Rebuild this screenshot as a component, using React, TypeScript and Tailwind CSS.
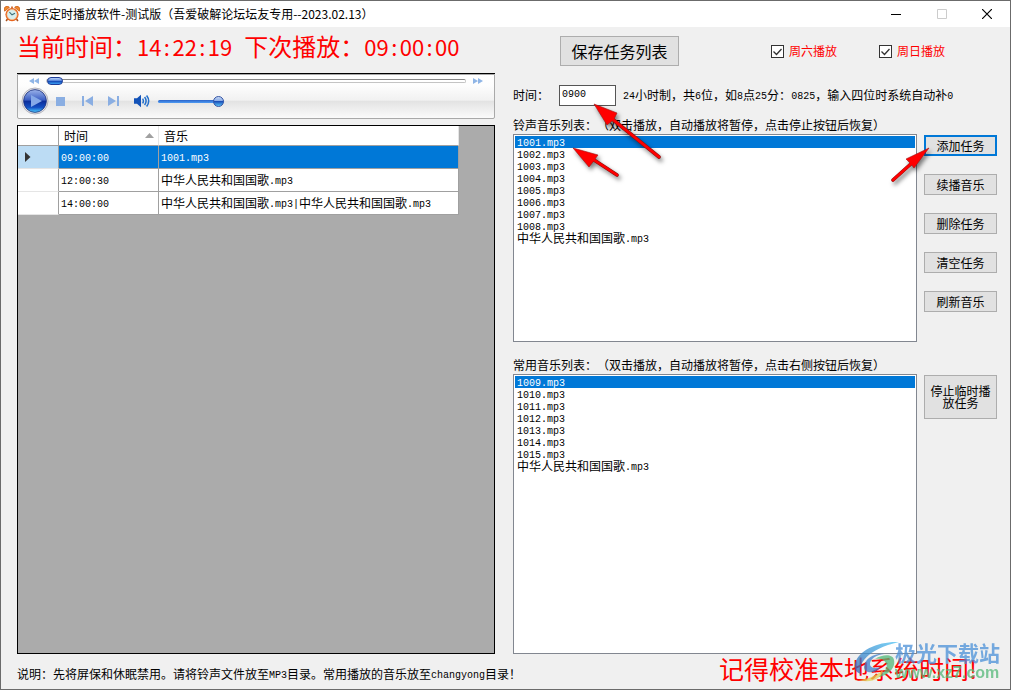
import { useState } from "react";
import type { ReactNode } from "react";
import clsx from "clsx";

interface Task {
  time: string;
  music: string;
}

const ANTHEM = "中华人民共和国国歌.mp3";

const TASKS: Task[] = [
  { time: "09:00:00", music: "1001.mp3" },
  { time: "12:00:30", music: ANTHEM },
  { time: "14:00:00", music: `${ANTHEM}|${ANTHEM}` },
];

const BELLS = [
  "1001.mp3",
  "1002.mp3",
  "1003.mp3",
  "1004.mp3",
  "1005.mp3",
  "1006.mp3",
  "1007.mp3",
  "1008.mp3",
  ANTHEM,
];

const COMMON = [
  "1009.mp3",
  "1010.mp3",
  "1011.mp3",
  "1012.mp3",
  "1013.mp3",
  "1014.mp3",
  "1015.mp3",
  ANTHEM,
];

const ACTIONS = ["添加任务", "续播音乐", "删除任务", "清空任务", "刷新音乐"];

/** Sets the Latin runs at half the width of the Chinese characters. */
function Mixed({ text }: { text: string }) {
  return (
    <>
      {text.split(/([\x20-\x7e]+)/).map((part, i) =>
        i % 2 ? (
          <span key={i} className="align-[1px] font-['Liberation_Mono',monospace] text-[10px] leading-[10px]">
            {part}
          </span>
        ) : (
          part
        ),
      )}
    </>
  );
}

/** Time with every colon in a cell as wide as a digit. */
function Clock({ value }: { value: string }) {
  return (
    <span className="text-[22px]">
      {value.split(":").map((part, i) => (
        <span key={i}>
          {i > 0 && <span className="inline-block w-[11px] text-center">:</span>}
          {part}
        </span>
      ))}
    </span>
  );
}

function Arrow({
  width,
  height,
  points,
  tail,
  className,
}: {
  width: number;
  height: number;
  points: string;
  tail: [number, number, number, number];
  className: string;
}) {
  return (
    <svg
      width={width}
      height={height}
      className={clsx(
        "absolute z-10 pointer-events-none overflow-visible drop-shadow-[2px_3px_2px_rgba(0,0,0,0.5)]",
        className,
      )}
      aria-hidden="true"
    >
      <line
        x1={tail[0]}
        y1={tail[1]}
        x2={tail[2]}
        y2={tail[3]}
        stroke="#8d1010"
        strokeWidth="3.6"
        strokeLinecap="round"
      />
      <polygon points={points} fill="#f00" stroke="#a01010" strokeWidth="0.6" />
      <line
        x1={tail[0]}
        y1={tail[1]}
        x2={tail[2]}
        y2={tail[3]}
        stroke="#f00"
        strokeWidth="2.6"
        strokeLinecap="round"
      />
    </svg>
  );
}

function AlarmIcon() {
  return (
    <svg width="16" height="16" viewBox="0 0 16 16" aria-hidden="true">
      <path d="M3.5 13l-1.4 2M12.5 13l1.4 2" stroke="#a8501c" strokeWidth="1.6" />
      <path d="M.7 5.2A3 3 0 0 1 5.4 1.4zM15.3 5.2A3 3 0 0 0 10.6 1.4z" fill="#f08a2c" stroke="#c4561a" strokeWidth=".7" />
      <circle cx="8" cy="8.6" r="6.6" fill="#e8641c" />
      <circle cx="8" cy="8.6" r="5" fill="#d7eeee" stroke="#f6c79a" strokeWidth=".7" />
      <path d="M5.4 6.2L8 8.8l3-1.6" stroke="#3b6f78" strokeWidth="1.1" fill="none" />
      <path d="M8 .6v1.6" stroke="#c4561a" strokeWidth="1.6" />
    </svg>
  );
}

function TitleBar() {
  return (
    <header className="flex h-[26px] shrink-0 items-center bg-white pl-[3px]">
      <AlarmIcon />
      <h1 className="ml-[5px] grow text-xs leading-4">
        音乐定时播放软件-测试版（吾爱破解论坛坛友专用--2023.02.13）
      </h1>
      <button type="button" aria-label="最小化" className="flex h-full w-[46px] items-center justify-center">
        <svg width="10" height="10" stroke="#000">
          <path d="M0 5.5h10" />
        </svg>
      </button>
      <button type="button" disabled aria-label="最大化" className="flex h-full w-[45px] items-center justify-center">
        <svg width="10" height="10" stroke="#ccc" fill="none">
          <path d="M.5.5h9v9h-9z" />
        </svg>
      </button>
      <button type="button" aria-label="关闭" className="flex h-full w-[46px] items-center justify-center">
        <svg width="10" height="10" stroke="#000" strokeWidth="1.2">
          <path d="M0 0l10 10M10 0L0 10" />
        </svg>
      </button>
    </header>
  );
}

function IconButton({ label, children }: { label: string; children: ReactNode }) {
  return (
    <button type="button" aria-label={label} className="flex shrink-0 items-center justify-center">
      {children}
    </button>
  );
}

function Player() {
  const [position, setPosition] = useState(0);
  const [volume, setVolume] = useState(100);

  return (
    <div className="h-[46px] shrink-0 border-t border-black">
      <div className="flex h-full flex-col rounded-b-xs border border-[#a9a9a9] bg-[linear-gradient(#fff_0%,#fdfdfd_25%,#f1f1f1_59%,#e2e2e2_60%,#fbfbfb_100%)]">
        <div className="flex h-3 items-center gap-[7px] pr-[11px] pl-[11px]">
          <IconButton label="快退">
            <svg width="10" height="6" fill="#8fb5e6">
              <path d="M5 0v6L0 3zM10 0v6L5 3z" />
            </svg>
          </IconButton>
          <input
            type="range"
            aria-label="播放进度"
            value={position}
            onChange={(e) => setPosition(Number(e.target.value))}
            className="h-2 min-w-0 grow appearance-none bg-transparent [&::-webkit-slider-runnable-track]:h-1 [&::-webkit-slider-runnable-track]:rounded-sm [&::-webkit-slider-runnable-track]:border [&::-webkit-slider-runnable-track]:border-t-[#888] [&::-webkit-slider-runnable-track]:border-[#c4c4c4] [&::-webkit-slider-runnable-track]:bg-white [&::-webkit-slider-thumb]:-mt-[3px] [&::-webkit-slider-thumb]:h-2 [&::-webkit-slider-thumb]:w-4 [&::-webkit-slider-thumb]:appearance-none [&::-webkit-slider-thumb]:rounded-full [&::-webkit-slider-thumb]:border [&::-webkit-slider-thumb]:border-[#1c3c98] [&::-webkit-slider-thumb]:bg-[linear-gradient(#b4cbf4_0%,#6f9be6_40%,#0f3fb0_50%,#3aa0f4_100%)]"
          />
          <IconButton label="快进">
            <svg width="10" height="6" fill="#8fb5e6">
              <path d="M0 0v6l5-3zM5 0v6l5-3z" />
            </svg>
          </IconButton>
        </div>
        <div className="flex h-7 items-center pl-[3px]">
          <IconButton label="播放">
            <svg width="28" height="28" viewBox="0 0 28 28">
              <defs>
                <linearGradient id="ball" x1="0" y1="0" x2="0" y2="1">
                  <stop offset="0" stopColor="#9db4ea" />
                  <stop offset=".45" stopColor="#3c5fc4" />
                  <stop offset=".52" stopColor="#0c2f9c" />
                  <stop offset=".78" stopColor="#1450c4" />
                  <stop offset="1" stopColor="#4fd0ff" />
                </linearGradient>
              </defs>
              <circle cx="14" cy="14" r="13" fill="#e6e6ea" stroke="#b4b4bc" />
              <circle cx="14" cy="14" r="11.4" fill="url(#ball)" stroke="#1b2f7a" strokeWidth=".8" />
              <path d="M10 8l11 6-11 6z" fill="#86a9e8" />
            </svg>
          </IconButton>
          <div className="ml-[7px] flex items-center gap-[17px]">
            <IconButton label="停止">
              <svg width="9" height="9" fill="#8aaee2">
                <path d="M0 0h9v9H0z" />
              </svg>
            </IconButton>
            <div className="flex items-center gap-[14px]">
              <IconButton label="上一首">
                <svg width="12" height="10" fill="#8aaee2">
                  <path d="M0 0h2v10H0zM11 0v10L3 5z" />
                </svg>
              </IconButton>
              <IconButton label="下一首">
                <svg width="12" height="10" fill="#8aaee2">
                  <path d="M9 0h2v10H9zM0 0v10l8-5z" />
                </svg>
              </IconButton>
              <IconButton label="静音">
                <svg width="16" height="14" viewBox="0 0 16 14" fill="none">
                  <path d="M0 4.2h3L7 .8v12.400L3 9.800H0z" fill="#1252b8" />
                  <path d="M8.600 4.600q1.600 2.400 0 4.800M10.600 3q3 4 0 8M12.600 1.500q4.200 5.500 0 11" stroke="#2470cc" strokeWidth="1.500" />
                </svg>
              </IconButton>
            </div>
          </div>
          <input
            type="range"
            aria-label="音量"
            value={volume}
            onChange={(e) => setVolume(Number(e.target.value))}
            className="ml-2 h-3 w-[66px] appearance-none bg-transparent [&::-webkit-slider-runnable-track]:h-[3px] [&::-webkit-slider-runnable-track]:rounded-full [&::-webkit-slider-runnable-track]:bg-[linear-gradient(#2a62c8,#4f9cf4)] [&::-webkit-slider-thumb]:-mt-1 [&::-webkit-slider-thumb]:size-[11px] [&::-webkit-slider-thumb]:appearance-none [&::-webkit-slider-thumb]:rounded-full [&::-webkit-slider-thumb]:border [&::-webkit-slider-thumb]:border-[#3454a4] [&::-webkit-slider-thumb]:bg-[linear-gradient(#c4d6f4_0%,#86a8e4_45%,#1c50b8_50%,#56c0f8_100%)]"
          />
        </div>
      </div>
    </div>
  );
}

function TaskTable() {
  const [current, setCurrent] = useState(0);

  return (
    <div className="mt-[6px] min-h-0 grow overflow-hidden border border-black bg-[#ababab]">
      <table className="w-[441px] table-fixed border-separate border-spacing-0 text-left">
        <colgroup>
          <col className="w-[41px]" />
          <col className="w-[100px]" />
          <col className="w-[300px]" />
        </colgroup>
        <thead>
          <tr className="h-5 bg-white">
            <th className="border-r border-b border-[#a0a0a0]" />
            <th className="border-b border-r border-b-[#a0a0a0] border-r-[#e5e5e5] p-0 font-normal">
              <div className="flex items-center justify-between pr-1 pl-[5px]">
                时间
                <svg width="9" height="5" fill="#a0a0a0">
                  <path d="M4.5 0L9 5H0z" />
                </svg>
              </div>
            </th>
            <th className="border-b border-r border-b-[#a0a0a0] border-r-[#e5e5e5] p-0 pl-[5px] font-normal">
              音乐
            </th>
          </tr>
        </thead>
        <tbody>
          {TASKS.map((task, i) => {
            const selected = i === current;
            return (
              <tr
                key={task.time}
                onClick={() => setCurrent(i)}
                className={clsx("h-[23px]", selected ? "bg-[#0078d7] text-white" : "bg-white")}
              >
                <td
                  className={clsx(
                    "border-r border-b border-r-[#a0a0a0] border-b-[#e5e5e5] p-0 pl-[7px]",
                    selected && "bg-[#bcdcf4]",
                  )}
                >
                  {selected && (
                    <svg width="6" height="10" fill="#333">
                      <path d="M0 0l5.500 5L0 10z" />
                    </svg>
                  )}
                </td>
                <td className="border-r border-b border-[#a0a0a0] p-0 pl-0.5">
                  <Mixed text={task.time} />
                </td>
                <td className="border-r border-b border-[#a0a0a0] p-0 pl-0.5">
                  <Mixed text={task.music} />
                </td>
              </tr>
            );
          })}
        </tbody>
      </table>
    </div>
  );
}

function ListBox({ label, items }: { label: string; items: string[] }) {
  const [picked, setPicked] = useState(0);

  return (
    <ul
      role="listbox"
      aria-label={label}
      className="h-full overflow-hidden border border-[#828790] bg-white p-px"
    >
      {items.map((item, i) => (
        <li
          key={item}
          role="option"
          aria-selected={i === picked}
          onClick={() => setPicked(i)}
          className={clsx("h-3 cursor-default pl-0.5", i === picked && "bg-[#0078d7] text-white")}
        >
          <Mixed text={item} />
        </li>
      ))}
    </ul>
  );
}

function DayCheck({ id, label }: { id: string; label: string }) {
  const [on, setOn] = useState(true);

  return (
    <div className="flex items-center gap-[5px]">
      <span className="relative flex size-[13px]">
        <input
          id={id}
          type="checkbox"
          checked={on}
          onChange={() => setOn(!on)}
          className="size-[13px] appearance-none border border-[#333] bg-white"
        />
        {on && (
          <svg width="13" height="13" className="pointer-events-none absolute inset-0">
            <path d="M2.500 6.500l3 3 5-5.500" fill="none" stroke="#333" strokeWidth="1.300" />
          </svg>
        )}
      </span>
      <label htmlFor={id} className="text-[#f00]">
        {label}
      </label>
    </div>
  );
}

function SiteMark() {
  return (
    <div className="pointer-events-none absolute right-[10px] bottom-[6px] z-20 flex items-center opacity-75" aria-hidden="true">
      <svg width="46" height="42" viewBox="0 0 46 42" className="-mr-1">
        <defs>
          <linearGradient id="sky" x1="0" y1="1" x2="1" y2="0">
            <stop offset="0" stopColor="#2c62b4" />
            <stop offset="1" stopColor="#4cc4f4" />
          </linearGradient>
        </defs>
        <path d="M46 1C26 0 5 9 2 23c-1 6 2 9 6 10C4 24 14 8 46 1z" fill="url(#sky)" />
        <path d="M11 26c1-9 11-14 20-13-8 1-14 5-14 10 0 4 6 5 10 3-2 6-16 8-16 0z" fill="#3c80cc" />
        <path d="M22 18c8-5 18-5 19 1 2 9-8 17-20 18 9-4 15-10 12-15-2-4-6-5-11-4z" fill="#52b878" />
        <path d="M6 39c9-1 17-4 24-10-1 8-12 14-24 10z" fill="#e0d254" />
      </svg>
      <div className="font-bold">
        <p className="text-[21px] leading-[22px] text-[#4a90d8]">极光下载站</p>
        <p className="font-['Liberation_Sans',sans-serif] text-base leading-5 text-[#54b878]">
          www.xz7.com
        </p>
      </div>
    </div>
  );
}

function ControlPanel() {
  const [time, setTime] = useState("0900");

  return (
    <section className="flex min-w-0 flex-col">
      <div className="flex h-12 shrink-0 items-center justify-between pr-[52px] pl-[47px]">
        <button
          type="button"
          className="h-[30px] w-[119px] border border-[#adadad] bg-[#e1e1e1] text-base leading-4"
        >
          保存任务列表
        </button>
        <div className="flex gap-[42px]">
          <DayCheck id="saturday" label="周六播放" />
          <DayCheck id="sunday" label="周日播放" />
        </div>
      </div>

      <div className="mt-[9px] flex h-[22px] shrink-0 items-center">
        <label htmlFor="time" className="w-[46px]">
          时间：
        </label>
        <div className="relative">
          <input
            id="time"
            value={time}
            onChange={(e) => setTime(e.target.value)}
            className="block h-[21px] w-[57px] border border-[#555] bg-white pb-0.5 pl-0.5 font-['Liberation_Mono',monospace] text-[10px] outline-none"
          />
          <Arrow
            width={68}
            height={56}
            points="0,0 23,9 20,15 18,17 13,21"
            tail={[17, 14, 65, 53]}
            className="top-[19px] left-[35px]"
          />
        </div>
        <span className="ml-[7px] whitespace-nowrap">
          <Mixed text="24小时制，共6位，如8点25分：0825，输入四位时系统自动补0" />
        </span>
      </div>

      <div className="grid grow grid-cols-[1fr_73px] grid-rows-[auto_208fr_auto_280fr] gap-x-[7px]">
        <h2 className="col-span-2 mt-[13px] mb-[3px]">
          铃声音乐列表：（双击播放，自动播放将暂停，点击停止按钮后恢复）
        </h2>
        <div className="relative min-w-0">
          <ListBox label="铃声音乐列表" items={BELLS} />
          <Arrow
            width={48}
            height={31}
            points="0,0 25,7 22,11 20,14 16,19"
            tail={[18, 10, 44, 27]}
            className="top-[14px] left-[60px]"
          />
        </div>
        <div className="relative flex flex-col gap-[18px] pt-px">
          {ACTIONS.map((action, i) => (
            <button
              key={action}
              type="button"
              className={clsx(
                "h-[21px] bg-[#e1e1e1]",
                i === 0 ? "border-2 border-[#0078d7]" : "border border-[#adadad]",
              )}
            >
              {action}
            </button>
          ))}
          <Arrow
            width={38}
            height={34}
            points="38,0 15,11 19,15 20,16 23,20"
            tail={[2, 32, 22, 14]}
            className="top-[14px] -left-[33px]"
          />
        </div>
        <h2 className="col-span-2 mt-[17px] mb-[3px]">
          常用音乐列表：（双击播放，自动播放将暂停，点击右侧按钮后恢复）
        </h2>
        <ListBox label="常用音乐列表" items={COMMON} />
        <div className="pt-px">
          <button type="button" className="h-11 w-full border border-[#adadad] bg-[#e1e1e1] px-1">
            停止临时播放任务
          </button>
        </div>
      </div>

      <p className="h-[35px] shrink-0 pr-5 text-right text-[25px] leading-7 text-[#f00]">
        记得校准本地系统时间!
      </p>
    </section>
  );
}

export default function App() {
  return (
    <div className="relative flex h-screen min-h-[600px] flex-col overflow-hidden border border-[#6b6b6b] bg-[#f0f0f0] font-['Noto_Sans_CJK_SC',sans-serif] text-xs leading-3 text-black [text-spacing-trim:space-all]">
      <TitleBar />
      <main className="grid min-h-0 grow grid-cols-[478fr_484fr] gap-[18px] pr-[13px] pl-4">
        <section className="flex min-h-0 min-w-0 flex-col">
          <p className="h-[46px] shrink-0 text-2xl leading-[38px] whitespace-pre text-[#f00]">
            当前时间：
            <Clock value="14:22:19" />
            <span className="inline-block w-3" />
            下次播放：
            <Clock value="09:00:00" />
          </p>
          <Player />
          <TaskTable />
          <p className="flex h-[35px] shrink-0 items-center pt-[6px] whitespace-nowrap">
            <span>
              <Mixed text="说明：先将屏保和休眠禁用。请将铃声文件放至MP3目录。常用播放的音乐放至changyong目录！" />
            </span>
          </p>
        </section>
        <ControlPanel />
      </main>
      <SiteMark />
    </div>
  );
}
